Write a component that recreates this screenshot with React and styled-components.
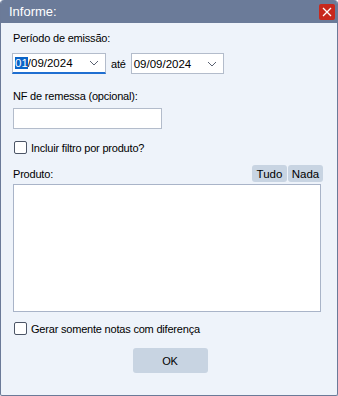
import React from 'react';
import styled, { createGlobalStyle } from 'styled-components';

const Global = createGlobalStyle`
  html, body { margin: 0; padding: 0; background: #ffffff; }
  body { font-family: "Liberation Sans", Arial, sans-serif; font-size: 11px; letter-spacing: -0.2px; color: #000; }
`;

const Window = styled.div`
  width: 338px;
  height: 396px;
  box-sizing: border-box;
  display: flex;
  flex-direction: column;
  border: 1px solid #6b7a98;
  border-top: none;
  border-radius: 4px 4px 2px 2px;
  overflow: hidden;
  background: #eef3fa;
`;

const TitleBar = styled.div`
  height: 23px;
  flex: none;
  background: #6b7b99;
  display: flex;
  align-items: center;
  justify-content: space-between;
  padding: 0 2px 0 8px;
  color: #ffffff;
  font-size: 13px;
  letter-spacing: 0;
`;

const CloseButton = styled.div`
  width: 16px;
  height: 16px;
  background: #c8281d;
  border-radius: 2px;
  display: flex;
  align-items: center;
  justify-content: center;
`;

const Body = styled.div`
  flex: 1;
  display: flex;
  flex-direction: column;
  padding: 7px 16px 0 11px;
`;

const Label = styled.div`
  height: 16px;
  line-height: 16px;
  margin-left: 1px;
  margin-top: ${p => p.$top || 0}px;
`;

const Row = styled.div`
  display: flex;
  align-items: center;
  gap: ${p => p.$gap || 0}px;
  margin-top: ${p => p.$top || 0}px;
`;

const Combo = styled.div`
  width: ${p => p.$w}px;
  height: 21px;
  box-sizing: border-box;
  background: #fff;
  border: 1px solid #b3bccb;
  border-bottom: ${p => (p.$focus ? '2px solid #1f6fd1' : '1px solid #b3bccb')};
  display: flex;
  align-items: center;
  justify-content: space-between;
  padding: 0 6px 0 2px;
  font-size: 11.5px;
  letter-spacing: 0;
`;

const Sel = styled.span`
  background: #0a64c8;
  color: #fff;
`;

const TextBox = styled.div`
  width: 149px;
  height: 21px;
  box-sizing: border-box;
  background: #fff;
  border: 1px solid #b3bccb;
  margin-left: 1px;
`;

const Check = styled.div`
  width: 11px;
  height: 11px;
  flex: none;
  border: 1px solid #4c5566;
  border-radius: 2px;
  background: #fff;
  margin-left: 2px;
`;

const HeadRow = styled.div`
  display: flex;
  align-items: center;
  justify-content: space-between;
  margin-top: 11px;
`;

const SmallBtns = styled.div`
  display: flex;
  gap: 1px;
  margin-right: -2px;
`;

const SmallBtn = styled.div`
  width: 35px;
  height: 17px;
  background: #c8d4e2;
  border-radius: 3px;
  display: flex;
  align-items: center;
  justify-content: center;
  font-size: 11.5px;
  letter-spacing: 0;
`;

const ListBox = styled.div`
  height: 128px;
  box-sizing: border-box;
  background: #fff;
  border: 1px solid #a9b4c8;
  margin: 2px 0 0 1px;
`;

const OkButton = styled.div`
  align-self: center;
  width: 75px;
  height: 25px;
  margin: 13px 0 0 7px;
  background: #c8d4e2;
  border-radius: 3px;
  display: flex;
  align-items: center;
  justify-content: center;
`;

const Chevron = () => (
  <svg width="10" height="6" viewBox="0 0 10 6">
    <path d="M1 1 L5 5 L9 1" stroke="#5a6272" strokeWidth="1" fill="none" />
  </svg>
);

export default function App() {
  return (
    <>
      <Global />
      <Window>
        <TitleBar>
          <span>Informe:</span>
          <CloseButton>
            <svg width="10" height="10" viewBox="0 0 10 10">
              <path d="M1 1 L9 9 M9 1 L1 9" stroke="#fff" strokeWidth="1.3" />
            </svg>
          </CloseButton>
        </TitleBar>
        <Body>
          <Label>Período de emissão:</Label>
          <Row $gap={5} $top={7}>
            <Combo $w={94} $focus>
              <span><Sel>01</Sel>/09/2024</span>
              <Chevron />
            </Combo>
            <span>até</span>
            <Combo $w={93}>
              <span>09/09/2024</span>
              <Chevron />
            </Combo>
          </Row>
          <Label $top={14}>NF de remessa (opcional):</Label>
          <Row $top={4}>
            <TextBox />
          </Row>
          <Row $gap={4} $top={12}>
            <Check />
            <span>Incluir filtro por produto?</span>
          </Row>
          <HeadRow>
            <Label>Produto:</Label>
            <SmallBtns>
              <SmallBtn>Tudo</SmallBtn>
              <SmallBtn>Nada</SmallBtn>
            </SmallBtns>
          </HeadRow>
          <ListBox />
          <Row $gap={4} $top={10}>
            <Check />
            <span>Gerar somente notas com diferença</span>
          </Row>
          <OkButton>OK</OkButton>
        </Body>
      </Window>
    </>
  );
}
